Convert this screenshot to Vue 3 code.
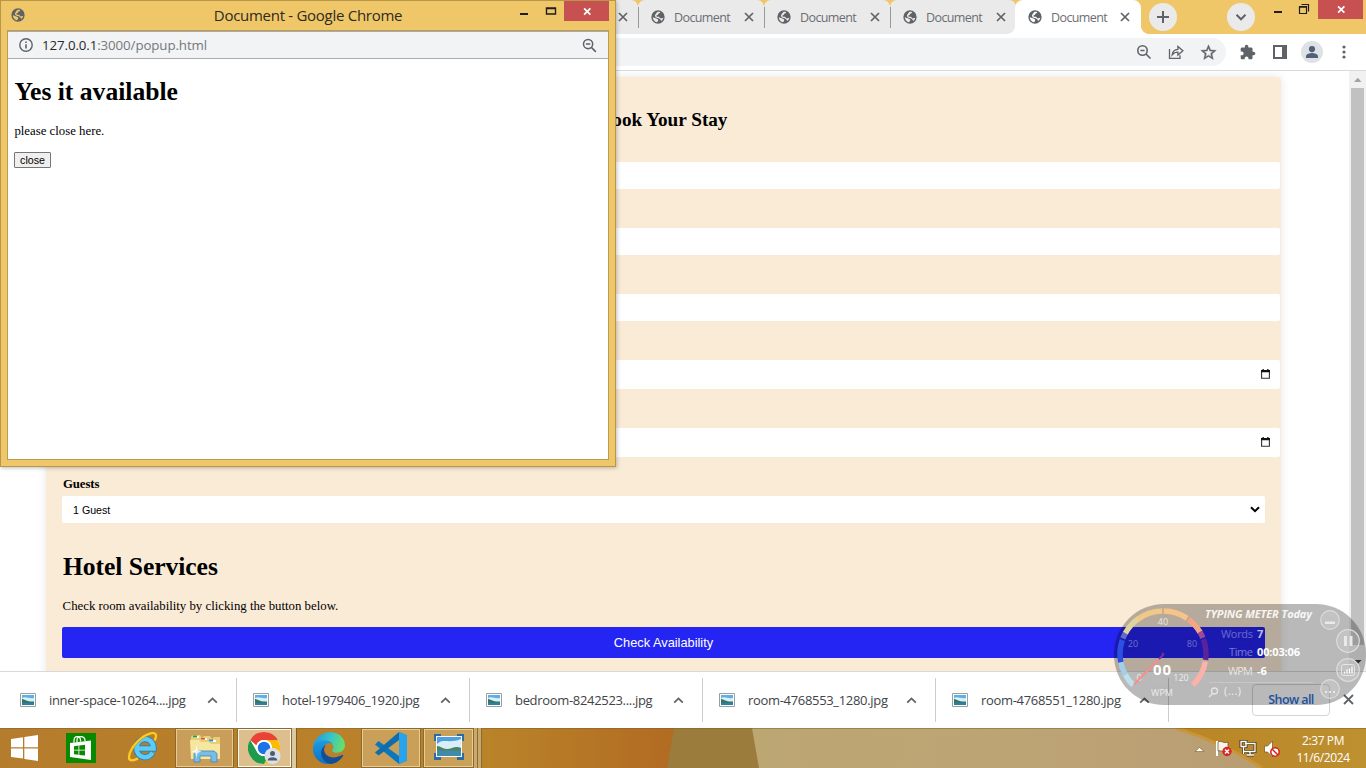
<script setup>
const tabs = [0, 1, 2, 3]
const downloads = [
  'inner-space-10264....jpg',
  'hotel-1979406_1920.jpg',
  'bedroom-8242523....jpg',
  'room-4768553_1280.jpg',
  'room-4768551_1280.jpg',
]
const fields = [
  { id: 1, date: false },
  { id: 2, date: false },
  { id: 3, date: false },
  { id: 4, date: true },
  { id: 5, date: true },
]
// Disc with two land-mass cut-outs
const globe =
  'M12 2a10 10 0 1 0 0 20a10 10 0 1 0 0-20zM11.500 4.200C14 3.800 15.500 4.600 15.300 5.800L12.500 7.200 11.800 8.800 9.300 10.300 10.300 11.600H13.500L15.800 14.200 19.800 13.200C19.500 15 18.500 16.800 17 18L15.300 15.500 13 13.800 8.500 12.800 7.300 9.800 9.300 6.300zM4.200 12.200L8.500 13.800 12 15.200 12.300 17.500 10.500 19.800C7 19.300 4.300 16 4.200 12.200z'

function arc(from, to, r = 43) {
  const p = (deg) => {
    const a = ((deg - 90) * Math.PI) / 180
    return `${(49 + r * Math.cos(a)).toFixed(2)} ${(50 + r * Math.sin(a)).toFixed(2)}`
  }
  return `M${p(from)}A${r} ${r} 0 0 1 ${p(to)}`
}
const gauge = [
  { d: arc(-136, -118), c: '#bfe0ea' },
  { d: arc(-119, -100), c: '#a3cfe6' },
  { d: arc(-101, -71), c: '#2e50e2' },
  { d: arc(-69, -60), c: '#5f6cc9' },
  { d: arc(-61, -35), c: '#e0d49c' },
  { d: arc(-36, -1), c: '#f0c988' },
  { d: arc(1, 34), c: '#f6c388' },
  { d: arc(36, 60), c: '#f4a583' },
  { d: arc(59, 68), c: '#9b4c92' },
  { d: arc(70, 98), c: '#5a239c' },
  { d: arc(100, 136), c: '#fbb2a8' },
]
</script>

<template>
  <div class="screen">
    <header class="strip">
      <div class="tab first"><svg class="x" viewBox="0 0 10 10"><path d="M1 1l8 8M9 1l-8 8" /></svg></div>
      <div v-for="t in tabs" :key="t" class="tab" :class="{ active: t === 3 }">
        <svg class="fav" viewBox="1.5 1.5 21 21"><path fill-rule="evenodd" :d="globe" /></svg>
        <span>Document</span>
        <svg class="x" viewBox="0 0 10 10"><path d="M1 1l8 8M9 1l-8 8" /></svg>
      </div>
      <div class="round plus"><svg viewBox="0 0 28 28"><path d="M14 8v12M8 14h12" /></svg></div>
      <div class="round down"><svg viewBox="0 0 28 28"><path d="M9.5 11.8l4.5 4.5 4.5-4.5" /></svg></div>
      <svg class="winctl" width="44" height="20" viewBox="0 0 44 20">
        <path d="M5 12h8" stroke-width="2" />
        <path d="M30.5 6.5h7v7h-7z M30.5 7.2h7 M32.5 4.5h7v7" stroke-width="1.2" />
      </svg>
      <div class="winclose"><svg viewBox="0 0 10 10"><path d="M1.2 1.5l7 7M8.2 1.5l-7 7" /></svg></div>
    </header>

    <div class="toolbar">
      <div class="omni">
        <div class="cell"><svg width="16" height="16" viewBox="0 0 16 16" class="line"><circle cx="6.5" cy="6.5" r="4.7" /><path d="M4.4 6.5h4.2M10 10l4.5 4.5" /></svg></div>
        <div class="cell"><svg width="16" height="16" viewBox="0 0 16 16" class="line thin"><path d="M1.5 5v9.3h10.500v-3M4.200 10.800c.4-3.600 2.600-5.200 5.700-5.400V2.500l5 4.300-5 4.200V8.200c-2.500 0-4.300.8-5.700 2.600z" /></svg></div>
        <div class="cell"><svg width="17" height="17" viewBox="1 1 22 22" class="fill"><path d="M22 9.24l-7.19-.62L12 2 9.19 8.63 2 9.24l5.46 4.73L5.82 21 12 17.27 18.18 21l-1.63-7.03L22 9.24zM12 15.4l-3.76 2.27 1-4.28-3.32-2.88 4.38-.38L12 6.1l1.71 4.04 4.38.38-3.32 2.88 1 4.28L12 15.4z" stroke="#5f6368" stroke-width=".5" /></svg></div>
      </div>
      <div class="cell"><svg width="16" height="16" viewBox="1 0 23 23" class="fill"><path d="M20.5 11H19V7c0-1.1-.9-2-2-2h-4V3.5C13 2.12 11.88 1 10.5 1S8 2.12 8 3.5V5H4c-1.1 0-1.99.9-1.99 2v3.8H3.5c1.49 0 2.7 1.21 2.7 2.7s-1.21 2.7-2.7 2.7H2V20c0 1.1.9 2 2 2h3.8v-1.5c0-1.49 1.21-2.7 2.7-2.7 1.49 0 2.7 1.21 2.7 2.7V22H17c1.1 0 2-.9 2-2v-4h1.5c1.38 0 2.5-1.12 2.5-2.5S21.88 11 20.5 11z" /></svg></div>
      <div class="cell"><svg width="14" height="14" viewBox="0 0 14 14"><path fill="#5f6368" fill-rule="evenodd" d="M0 0h14v14H0zM2 2v10h7V2z" /></svg></div>
      <div class="cell"><svg width="22" height="22" viewBox="0 0 22 22"><circle cx="11" cy="11" r="11" fill="#dee1e6" /><circle cx="11" cy="8.1" r="3.1" fill="#535f78" /><path d="M5 17v-1.7c0-2.2 4-3.2 6-3.2s6 1 6 3.2V17z" fill="#535f78" /></svg></div>
      <div class="cell"><svg width="4" height="14" viewBox="0 0 4 14" class="fill"><circle cx="2" cy="2" r="1.6" /><circle cx="2" cy="7" r="1.6" /><circle cx="2" cy="12" r="1.6" /></svg></div>
    </div>

    <main class="page">
      <section class="card">
        <h2>Book Your Stay</h2>
        <div v-for="f in fields" :key="f.id" class="field" :class="{ date: f.date }">
          <svg v-if="f.date" width="9" height="10" viewBox="0 0 9 10"><path d="M.6 1.600h7.800v7.600H.6z" fill="none" stroke="#333" stroke-width="1.100" /><path d="M0 1h9v2.200H0zM1.500 0h1.300v1.500H1.500zM6.200 0h1.300v1.500H6.200z" fill="#111" /></svg>
        </div>
        <div class="label">Guests</div>
        <div class="select"><span>1 Guest</span><svg width="10" height="7" viewBox="0 0 10 7"><path d="M1 1.2l4 4 4-4" fill="none" stroke="#000" stroke-width="2" /></svg></div>
        <h1>Hotel Services</h1>
        <p>Check room availability by clicking the button below.</p>
        <button class="check">Check Availability</button>
      </section>
      <aside class="scroll">
        <svg width="17" height="17" viewBox="0 0 17 17"><path d="M5 11l3.500-4h.6l3.400 4z" fill="#a3a3a3" /></svg>
        <div class="thumb"></div>
        <svg width="17" height="17" viewBox="0 0 17 17"><path d="M5 7l3.800 4 3.800-4z" fill="#404040" /></svg>
      </aside>
    </main>

    <footer class="shelf">
      <div v-for="d in downloads" :key="d" class="dl">
        <svg width="16" height="14" viewBox="0 0 16 14">
          <path d="M.5.5h15v13H.5z" fill="#fff" stroke="#9a9fa3" />
          <path d="M2 2h12v10H2z" fill="#5eb0e4" /><path d="M2 5c4-2 6 1 12 0v4H2z" fill="#d9f0f8" />
          <path d="M2 6c2 0 5 3 12 2.5V10H2z" fill="#37745c" /><path d="M2 9.6h12V12H2z" fill="#2c80a4" />
        </svg>
        <span>{{ d }}</span>
        <svg class="up" width="11" height="7" viewBox="0 0 11 7"><path d="M1.2 5.6l4.3-4.2 4.3 4.2" /></svg>
      </div>
      <div class="showall">Show all</div>
      <svg class="shx" width="11" height="11" viewBox="0 0 11 11"><path d="M1 1l9 9M10 1l-9 9" /></svg>
    </footer>

    <nav class="taskbar">
      <svg class="wall" width="1366" height="40" viewBox="0 0 1366 40" preserveAspectRatio="none">
        <defs>
          <linearGradient id="wa"><stop offset="0" stop-color="#b47c2d" /><stop offset=".4" stop-color="#b98029" /><stop offset=".72" stop-color="#b98329" /><stop offset="1" stop-color="#b16a22" /></linearGradient>
          <linearGradient id="wb"><stop offset="0" stop-color="#bca672" /><stop offset=".5" stop-color="#bda475" /><stop offset="1" stop-color="#b89d73" /></linearGradient>
          <linearGradient id="wc"><stop offset="0" stop-color="#ba8525" /><stop offset="1" stop-color="#bd9030" /></linearGradient>
        </defs>
        <path d="M0 0h680v40H0z" fill="url(#wa)" />
        <path d="M674 0h90v40h-97z" fill="#9b7c3d" />
        <path d="M752 0h520v40H759z" fill="url(#wb)" />
        <path d="M1176 0h190v40h-104c-24-16-54-30-86-40z" fill="url(#wc)" />
        <path d="M1176 0c32 10 62 24 86 40" fill="none" stroke="#c99537" stroke-width="3" />
        <path d="M0 .5h1366" stroke="#7d6028" stroke-opacity=".5" />
      </svg>

      <div class="slot win"><svg width="27" height="26" viewBox="0 0 27 26"><path d="M0 4l12-1.700v10H0zM13.300 2.100L27 0v12.300H13.300zM0 13.600h12v10L0 22zM13.300 13.600H27V26l-13.700-2z" fill="#fff" /></svg></div>
      <div class="slot store"><svg width="30" height="30" viewBox="0 0 30 30"><path d="M0 0h30v30H0z" fill="#088a00" /><path d="M4 10l21-2.600V27L4 24z" fill="#fff" /><path d="M8 9.500V7.500c0-5 6.500-5 6.500-.5v1.500M11 9V6.500c0-4 7.500-4 8 .5v1" fill="none" stroke="#fff" stroke-width="1.200" /><path d="M8 13.200l4.500-.6v4.200H8zM13.300 12.500l5.700-.7v5H13.300zM8 17.600h4.500v4.200L8 21.200zM13.300 17.600H19v5l-5.700-.7z" fill="#088a00" /></svg></div>
      <div class="slot ie"><svg width="32" height="32" viewBox="0 0 32 32">
        <path d="M9 17.500H26.500C26.500 5 9.500 5 9.500 17c0 11 13 11.500 16 4.500" fill="none" stroke="#1a7fc0" stroke-width="6.200" />
        <path d="M9 17.500H26.500C26.500 5 9.500 5 9.500 17c0 11 13 11.500 16 4.500" fill="none" stroke="#5ecbf5" stroke-width="4.600" />
        <path d="M11 27.500C6 30 1.500 30.500 2 25.500 3 17 14 4.500 24 2.200c5-1 6.500 2 3.500 7.300" fill="none" stroke="#c98d12" stroke-width="3" />
        <path d="M11 27.500C6 30 1.500 30.500 2 25.500 3 17 14 4.500 24 2.200c5-1 6.500 2 3.500 7.300" fill="none" stroke="#fccb2a" stroke-width="2.100" />
      </svg></div>
      <div class="slot app explorer"><svg width="32" height="30" viewBox="0 0 32 30">
        <path d="M2 4l2-2h7l2 3 2-2h6l2 3 2-2h6v21H2z" fill="#e9ce73" /><path d="M4 3h6v2H4zM12 5h6v2h-6zM20 7h7v2h-7z" fill="#fff" /><path d="M4 2.500h4v2H4z" fill="#21a33b" /><path d="M12 5h4v1.600h-4z" fill="#db4c32" /><path d="M20 6.500h4v2h-4z" fill="#2b8bdb" />
        <path d="M1 7h9l2 2h8l2 2h9v15H2z" fill="#f7e6a0" /><path d="M5 29V20.500l3-2.500h17l3 2.500V29h-6v-6H11v6z" fill="#79bce4" stroke="#4386b8" stroke-width=".8" /><path d="M7.500 12l1 5 4 1.500-4 1.500-1 5-1-5-4-1.500 4-1.500z" fill="#fff" opacity=".8" />
      </svg></div>
      <div class="slot app chrome"><svg width="34" height="34" viewBox="0 0 34 34">
        <circle cx="16" cy="17" r="16" fill="#fff" />
        <path d="M2.100 9A16 16 0 0 1 29.900 9H16a8 8 0 0 0-7.500 5.500z" fill="#ea4335" />
        <path d="M29.900 9A16 16 0 0 1 16 33l6.900-12A8 8 0 0 0 16 9z" fill="#fbbc05" />
        <path d="M2.100 9A16 16 0 0 0 16 33l6.900-12A8 8 0 0 1 9.100 21z" fill="#1e9b4b" />
        <circle cx="16" cy="17" r="8" fill="#fff" /><circle cx="16" cy="17" r="6.200" fill="#1a73e8" />
        <circle cx="24.500" cy="25" r="8" fill="#dde1e7" /><circle cx="24.500" cy="22.500" r="2.500" fill="#4d5b72" /><path d="M19.500 29.500c0-4.500 10-4.500 10 0z" fill="#4d5b72" />
      </svg></div>
      <div class="slot edge"><svg width="32" height="32" viewBox="0 0 32 32">
        <defs><linearGradient id="eg" x1="0" x2="1" y1=".2" y2=".4"><stop offset="0" stop-color="#2594d8" /><stop offset=".5" stop-color="#35c1cf" /><stop offset="1" stop-color="#66e06a" /></linearGradient><linearGradient id="eb" x1="0" x2="0" y1="0" y2="1"><stop offset="0" stop-color="#1b9de2" /><stop offset="1" stop-color="#0f6fc4" /></linearGradient></defs>
        <path d="M0 16C1-4 31-5 32 13c0 8-9 9-12.500 6.500-1.500-1.200 1.500-2 1-5C19 8 4 7 0 16z" fill="url(#eg)" />
        <path d="M0 16C1 7 16 6 20 12c-5-3-11 1-10 8 1 6 6 9 11 11C9 35-1 26 0 16z" fill="url(#eb)" />
        <path d="M13 13c-6 7 3 17 16 10 1-.5 1.500 0 1 1C27 29 21 33 16 31.500 6 28 6 16 13 13z" fill="#134f97" />
      </svg></div>
      <div class="slot app code"><svg width="32" height="32" viewBox="0 0 32 32"><path d="M24 0l8 3.500v25L24 32 0 12.500 3.500 9 24 24z" fill="#0b78bd" /><path d="M24 0v8L3.500 23.500 0 20.500z" fill="#0f6dac" /><path d="M24 0l8 3.500v25L24 32z" fill="#29a3ec" /></svg></div>
      <div class="slot app photo"><svg width="30" height="26" viewBox="0 0 30 26">
        <path d="M1.500 7V1.500H7M23 1.500h5.500V7M28.500 19v5.500H23M7 24.500H1.500V19" fill="none" stroke="#2b6da3" stroke-width="3" /><path d="M2 2h26v21H2z" fill="#f4f8fa" /><path d="M3 3h24v19H3z" fill="#4f9fe0" /><path d="M3 10c6-6 12 0 24-5v10H3z" fill="#d8eef8" /><path d="M3 12c4 0 5 3 10 3s8-4 14-1v3H3z" fill="#4a8263" /><path d="M3 16.500h24V22H3z" fill="#3f8ba9" />
      </svg></div>

      <div class="tray">
        <svg width="80" height="20" viewBox="0 0 80 20">
          <path d="M0 12.500l4.500-4L9 12.500z" fill="#fff" stroke="#7a602b" stroke-width=".6" />
          <path d="M22 2v15" stroke="#fff" stroke-width="2" /><path d="M23 3c4-2 5 2 10 0v9c-5 2-6-1-10 0z" fill="#f7f3e9" stroke="#634d22" stroke-width=".7" />
          <circle cx="32" cy="12.500" r="4.700" fill="#d72720" /><path d="M30 10.500l4 4M34 10.500l-4 4" stroke="#fff" stroke-width="1.500" />
          <g fill="none" transform="translate(2 0)"><path d="M48 4.500h10v8H47M53 12.500v3M49.500 16h7.500M44 2.500h5v5h-5zM46.500 7.500V15" stroke="#493817" stroke-width="3" /><path d="M48 4.500h10v8H47M53 12.500v3M49.500 16h7.500M44 2.500h5v5h-5zM46.500 7.500V15" stroke="#fff" stroke-width="1.300" /></g>
          <path d="M69.500 7h3l5-5v16l-5-5h-3z" fill="#fff" stroke="#6e5421" stroke-width=".7" />
        </svg>
        <svg class="mute" width="10" height="10" viewBox="0 0 10 10"><circle cx="5" cy="5" r="4.200" fill="#fff" stroke="#d72720" stroke-width="1.600" /><path d="M2 2l6 6" stroke="#d72720" stroke-width="1.600" /></svg>
      </div>
      <div class="clock"><span>2:37 PM</span><span>11/6/2024</span></div>
    </nav>

    <section class="meter">
      <svg width="252" height="101" viewBox="0 0 252 101">
        <path v-for="g in gauge" :key="g.d" :d="g.d" :stroke="g.c" stroke-width="5.500" fill="none" />
        <g fill="#fff" class="num">
          <text x="49" y="21" text-anchor="middle" opacity=".72">40</text>
          <text x="19" y="43" text-anchor="middle" opacity=".35">20</text>
          <text x="78" y="43" text-anchor="middle" opacity=".35">80</text>
          <text x="67" y="77" text-anchor="middle" opacity=".75">120</text>
          <text x="25" y="77" text-anchor="middle" opacity=".75">0</text>
          <text x="48" y="92" text-anchor="middle" opacity=".75">WPM</text>
        </g>
        <path d="M20 80.500L45 55" stroke="#fb8c8c" stroke-width="2" /><path d="M45 55l4.500-4.500" stroke="#8b2aa8" stroke-width="1.800" /><circle cx="49" cy="50" r="1.500" fill="#712b9c" />
        <text class="big" x="48" y="71" text-anchor="middle" textLength="18">00</text>
        <text class="ttl" x="91" y="14" textLength="107">TYPING METER Today</text>
        <g class="row">
          <text x="107" y="34" textLength="32" opacity=".33">Words</text><text x="143" y="34" class="b" opacity=".7">7</text>
          <text x="115" y="52" textLength="24" opacity=".4">Time</text><text x="143" y="52" class="b" textLength="43">00:03:06</text>
          <text x="114" y="71" textLength="25" opacity=".7">WPM</text><text x="143" y="71" class="b">-6</text>
        </g>
        <path d="M95 78.500h104" stroke="#d0d0d0" opacity=".6" />
        <g fill="none" stroke="#e4e4e4" stroke-width="1.400"><circle cx="100.500" cy="87" r="3" /><path d="M98.500 89.500L95 93" /></g>
        <text class="row" x="110" y="91" opacity=".75" textLength="17">(...)</text>
        <g fill="#fff" fill-opacity=".15" stroke="#dcdcdc" stroke-width="1.200">
          <circle cx="216" cy="16" r="9.300" /><circle cx="234" cy="37" r="11.300" /><circle cx="234" cy="66" r="11.300" /><circle cx="216" cy="85" r="9.300" />
        </g>
        <path d="M211 17.500h10v2.500h-10zM230 32h3v10h-3zM235.500 32h3v10h-3z" fill="#e9e9e9" />
        <path d="M211 87h2v2h-2zM215 87h2v2h-2zM219 87h2v2h-2z" fill="#e9e9e9" />
        <rect x="227.500" y="60.500" width="13" height="11" rx="2" fill="none" stroke="#e6e6e6" /><path d="M230.500 69.500v-2M233 69.500v-4M235.500 69.500v-5M238 69.500v-7" stroke="#fff" stroke-width="1.300" />
      </svg>
    </section>

    <section class="popup">
      <div class="ptitle">
        <svg class="fav" viewBox="1.5 1.5 21 21"><path fill-rule="evenodd" :d="globe" /></svg>
        <span>Document - Google Chrome</span>
        <svg class="pctl" width="60" height="20" viewBox="0 0 60 20"><path d="M11 13h8" stroke-width="2" /><path d="M37.500 7h9v6h-9zM37.500 7.500h9" stroke-width="1.400" /></svg>
        <div class="winclose"><svg viewBox="0 0 10 10"><path d="M1.2 1.5l7 7M8.2 1.5l-7 7" /></svg></div>
      </div>
      <div class="pbody">
        <div class="purl">
          <svg width="14" height="14" viewBox="0 0 14 14"><circle cx="7" cy="7" r="6.200" fill="none" stroke="#5f6368" stroke-width="1.400" /><path d="M6.200 6.200h1.600v4.200H6.200zM6.200 3.500h1.600V5H6.200z" fill="#5f6368" /></svg>
          <span><b>127.0.0.1</b>:3000/popup.html</span>
          <svg width="15" height="15" viewBox="0 0 16 16" class="line"><circle cx="6.500" cy="6.500" r="4.900" /><path d="M4.200 6.500h4.600M10 10l4.800 4.800" /></svg>
        </div>
        <div class="pdoc">
          <h1>Yes it available</h1>
          <p>please close here.</p>
          <button>close</button>
        </div>
      </div>
    </section>
  </div>
</template>

<style>
body { margin: 0; background: #fff; overflow: hidden; }
</style>

<style scoped>
* { box-sizing: border-box; }
svg { display: block; flex: none; }
.screen { position: relative; width: 1366px; height: 768px; overflow: hidden; display: flex; flex-direction: column; background: #fff; font-family: "Open Sans", "Noto Sans", sans-serif; color: #000; }
h1, h2, p { margin: 0; }
button { margin: 0; }
.line { fill: none; stroke: #5f6368; stroke-width: 1.6; }
.thin { stroke-width: 1.3; }
.fill { fill: #5f6368; }

.strip { height: 34px; flex: none; display: flex; background: #f0c768; padding-left: 512px; }
.tab { position: relative; width: 126px; height: 34px; flex: none; background: #eaeaea; border-radius: 7px 7px 0 0; display: flex; align-items: center; padding-left: 13px; font-size: 12.5px; color: #6b6e72; }
.tab::before { content: ""; position: absolute; left: 0; top: 7px; width: 1px; height: 21px; background: #98999a; }
.tab span { width: 56px; margin-left: 9px; white-space: nowrap; letter-spacing: -0.6px; }
.fav { width: 14px; height: 14px; fill: #5f6368; }
.x { width: 10px; height: 10px; margin-left: 13.5px; fill: none; stroke: #5f6368; stroke-width: 1.7; }
.tab.first .x { margin-left: 93px; }
.tab.active { background: #fff; margin-left: -1px; border-radius: 8px 8px 0 0; }
.tab.active .x { margin-left: 13px; }
.tab.active::before { left: -8px; top: 26px; width: 8px; height: 8px; background: radial-gradient(circle at 0 0, #eaeaea 7.6px, #fff 8.2px); }
.tab.active::after { content: ""; position: absolute; right: -8px; top: 26px; width: 8px; height: 8px; background: radial-gradient(circle at 100% 0, #f0c768 7.6px, #fff 8.2px); }
.round { width: 28px; height: 28px; margin-top: 3px; flex: none; border-radius: 50%; background: #eaeaea; }
.round svg { fill: none; stroke: #5f6368; stroke-width: 2; }
.plus { margin-left: 8px; }
.down { margin-left: 50px; }
.winctl { margin-left: 14px; fill: none; stroke: #1e1e1e; }
.winclose { margin-left: 5px; width: 45px; height: 19px; background: #c75050; display: flex; align-items: center; justify-content: center; flex: none; }
.winclose svg { width: 9px; height: 9px; margin-left: 1px; fill: none; stroke: #fff; stroke-width: 1.9; }

.toolbar { height: 37px; flex: none; display: flex; align-items: center; border-bottom: 1px solid #d8d9db; }
.omni { width: 1226px; height: 28px; margin-right: 6px; background: #f1f3f4; border-radius: 14px; display: flex; align-items: center; justify-content: flex-end; padding-right: 2px; }
.cell { width: 32px; display: flex; justify-content: center; }

.page { height: 600px; flex: none; display: flex; justify-content: space-between; padding-left: 46px; overflow: hidden; font-family: "Liberation Serif", serif; }
.card { width: 1235px; height: 640px; margin-top: 6px; padding: 0 16px; background: #faebd7; border-radius: 4px; box-shadow: 0 0 10px rgba(0, 0, 0, 0.1); }
.card h2 { margin-top: 32px; height: 22px; line-height: 22px; margin-bottom: 31px; font-size: 19.2px; text-align: center; }
.field { width: 1218px; height: 27px; margin-bottom: 39px; background: #fff; border-radius: 2px; display: flex; align-items: center; justify-content: flex-end; padding-right: 10px; }
.field.date { height: 29px; padding-bottom: 1px; }
.label { margin-top: -20px; margin-left: 1px; height: 16px; line-height: 16px; font-size: 12.8px; font-weight: bold; letter-spacing: -0.1px; }
.select { margin-top: 4px; height: 27px; background: #fff; border-radius: 2px; display: flex; align-items: center; justify-content: space-between; padding: 0 5px 0 11px; font: 10.67px "Liberation Sans", sans-serif; }
.card h1 { margin: 29px 0 0 1px; height: 30px; line-height: 30px; font-size: 25.6px; letter-spacing: -0.06px; }
.card p { margin: 17px 0 13px 0.6px; height: 15px; line-height: 15px; font-size: 12.8px; }
.card .check { display: block; width: 100%; height: 31px; border: 0; border-radius: 2px; background: #2424f3; color: #fff; font: 12.8px "Liberation Sans", sans-serif; }
.scroll { width: 17px; height: 600px; background: #f1f1f1; }
.thumb { width: 13px; height: 557px; margin: 0 0 8px 2px; background: #c1c1c1; }

.shelf { height: 57px; flex: none; display: flex; align-items: center; border-top: 1px solid #d9d9db; background: #fff; }
.dl { width: 233px; height: 44px; display: flex; align-items: center; padding-left: 16px; border-right: 1px solid #cdcdcf; font-size: 13px; color: #414347; }
.dl:first-child { width: 237px; padding-left: 20px; }
.dl span { width: 144px; margin-left: 13px; white-space: nowrap; letter-spacing: -0.32px; }
.up { margin-left: 14px; fill: none; stroke: #5f6368; stroke-width: 1.8; }
.showall { width: 78px; height: 32px; margin-left: 83px; border: 1px solid #d3d5d9; border-radius: 4px; display: flex; align-items: center; justify-content: center; padding-bottom: 2px; font-size: 12.5px; font-weight: 600; letter-spacing: -0.6px; color: #2b70dc; }
.shx { margin-left: 13px; margin-bottom: 2px; fill: none; stroke: #5f6368; stroke-width: 1.8; }

.taskbar { position: relative; height: 40px; flex: none; display: flex; }
.wall { position: absolute; left: 0; top: 0; }
.slot { position: relative; height: 40px; display: flex; align-items: center; justify-content: center; flex: none; }
.win { width: 49px; padding-bottom: 1px; }
.store { width: 63px; }
.ie { width: 62px; margin-left: 1px; }
.ie svg { margin: 0 2px 2px 0; }
.app { border: 1px solid #8a6a30; box-shadow: inset 0 0 0 1px rgba(255, 240, 200, 0.55); background: rgba(255, 250, 235, 0.25); }
.explorer { width: 59px; }
.chrome { width: 55px; margin-left: 3px; background: rgba(255, 250, 235, 0.52); box-shadow: inset 0 0 0 1px rgba(255, 255, 255, 0.9), 4px 0 0 #ddc9a0, 5px 0 0 #7b5c25; }
.edge { width: 69px; padding-left: 5px; }
.code { width: 60px; }
.photo { width: 51px; margin-left: 2px; padding-bottom: 3px; box-shadow: inset 0 0 0 1px rgba(255, 240, 200, 0.55), 3px 0 0 #cba86b, 4px 0 0 #8a6a30, 7px 0 0 #cba86b, 8px 0 0 #8a6a30; }
.tray { position: relative; margin: 11px 0 0 auto; width: 87px; }
.mute { position: absolute; left: 75px; top: 8px; }
.clock { position: relative; width: 84px; display: flex; flex-direction: column; align-items: center; padding: 4px 2px 0 0; color: #fff; font-size: 12px; line-height: 17px; letter-spacing: -0.4px; }

.meter { position: absolute; left: 1114px; top: 604px; width: 252px; height: 101px; border-radius: 50px; background: rgba(0, 0, 0, 0.275); overflow: hidden; }
.meter text { font-family: "Open Sans", sans-serif; }
.meter .num text { font-size: 9px; }
.meter .big { font-size: 15px; font-weight: 700; fill: #fff; }
.meter .ttl { font-size: 11px; font-weight: 700; font-style: italic; fill: #fff; opacity: 0.88; }
.meter .row, .meter .row text { font-size: 11px; fill: #fff; }
.meter .row .b { font-weight: 700; }

.popup { position: absolute; left: 0; top: 0; width: 616px; height: 467px; padding: 0 6px 6px 6px; background: #f0c768; border: 1px solid #b8974b; box-shadow: 1px 1px 4px rgba(0, 0, 0, 0.25); }
.ptitle { position: relative; height: 29px; display: flex; }
.ptitle .fav { margin: 7px 0 0 4px; }
.ptitle span { flex: 1; padding-left: 82px; text-align: center; font-size: 15px; line-height: 28px; color: #2d2a22; letter-spacing: -0.28px; }
.pctl { fill: none; stroke: #1e1e1e; }
.ptitle .winclose { margin: 0 0 0 -5px; height: 20px; }
.pbody { height: 430px; border: 1px solid #bb9c55; background: #fff; }
.purl { height: 28px; display: flex; align-items: center; padding: 0 11px; background: #f1f3f4; border-top: 1px solid #aaa; border-bottom: 1px solid #a9abad; font-size: 13.3px; color: #75787c; }
.purl span { flex: 1; margin-left: 9px; letter-spacing: -0.1px; }
.purl b { font-weight: 400; color: #27282b; }
.pdoc { padding: 18px 0 0 6.4px; font-family: "Liberation Serif", serif; }
.pdoc h1 { font-size: 25.6px; line-height: 29px; }
.pdoc p { margin: 18px 0 13px; font-size: 12.8px; line-height: 15px; }
.pdoc button { display: block; width: 37px; height: 16px; margin-left: -0.4px; padding: 0; border: 1px solid #767676; border-radius: 1px; background: #efefef; font: 10.67px/12px "Liberation Sans", sans-serif; }
</style>
